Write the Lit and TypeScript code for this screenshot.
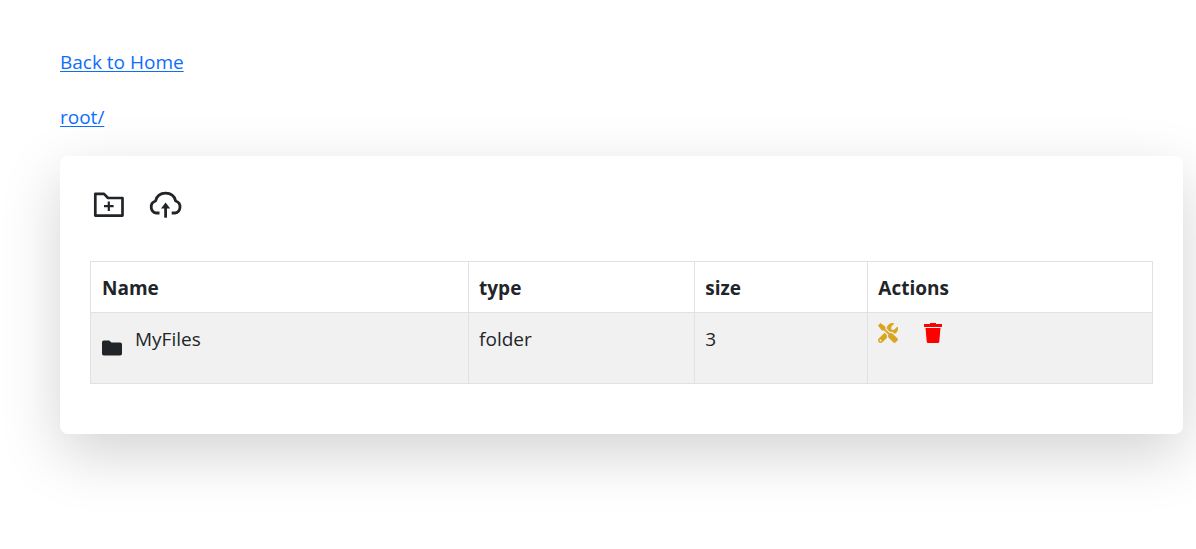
import { LitElement, html, css, svg } from "lit";
import { customElement, property } from "lit/decorators.js";

interface Entry {
  name: string;
  type: string;
  size: number;
}

const folderPlus = svg`
  <svg class="lg" viewBox="0 0 36 36" aria-hidden="true">
    <path d="M5.3 28.600V6.900H14L18 11H32.500V28.600Z" fill="none" stroke="currentColor" stroke-width="2.700" stroke-linejoin="round"/>
    <path d="M18.800 14.500V24M14 19.200H23.600" fill="none" stroke="currentColor" stroke-width="2.200"/>
  </svg>`;

const cloudUpload = svg`
  <svg class="lg" viewBox="0 0 36 36" aria-hidden="true">
    <path d="M12.500 26H9.300A6.200 6.200 0 0 1 8.500 14C9.700 9.300 13.500 6.200 18.600 6.200S27.500 9.300 28.700 14A6.200 6.200 0 0 1 27.900 26H24.700" fill="none" stroke="currentColor" stroke-width="2.800"/>
    <path d="M18.600 30.700V19" fill="none" stroke="currentColor" stroke-width="2.800"/>
    <path d="M18.600 15.500L23.200 21.500H14Z" fill="currentColor"/>
  </svg>`;

const folder = svg`
  <svg class="sm" viewBox="0 0 20 20" aria-hidden="true">
    <path d="M1.800 2.500H7.200L9.500 4.500H18.200Q20 4.500 20 6.300V15.700Q20 17.500 18.200 17.500H1.800Q0 17.500 0 15.700V4.300Q0 2.500 1.800 2.500Z" fill="currentColor"/>
  </svg>`;

const tools = svg`
  <svg class="sm" viewBox="0 0 512 512" aria-hidden="true">
    <path fill="currentColor" d="M331.800 224.100c28.290 0 54.880 10.990 74.860 30.970l19.590 19.590c40.010-17.740 71.250-53.300 81.620-96.650c5.725-23.920 5.340-47.080 .2148-68.400c-2.613-10.880-16.430-14.510-24.340-6.604l-68.900 68.900h-75.600V97.200l68.900-68.900c7.912-7.912 4.275-21.730-6.604-24.340c-21.320-5.125-44.480-5.510-68.400 .2148c-55.300 13.230-98.390 60.220-107.200 116.400C224.500 128.900 224.200 137 224.300 145l82.780 82.860C315.200 225.100 323.500 224.100 331.800 224.100zM384 278.600c-23.160-23.160-57.570-27.570-85.390-13.900L191.100 158L191.100 95.990l-127.100-95.990L0 63.100l96 127.100l62.040 .0077l106.700 106.600c-13.670 27.820-9.251 62.230 13.910 85.390l117 117.100c14.620 14.500 38.210 14.500 52.710-.0016l52.750-52.750c14.500-14.500 14.500-38.080-.0016-52.710L384 278.600zM227.900 307L168.700 247.900l-148.900 148.900c-26.370 26.370-26.370 69.080 0 95.450C32.960 505.400 50.210 512 67.500 512s34.540-6.592 47.720-19.780l119.100-119.100C225.500 352.300 222.600 329.400 227.900 307zM64 472c-13.250 0-24-10.750-24-24c0-13.260 10.750-24 24-24S88 434.700 88 448C88 461.300 77.250 472 64 472z"/>
  </svg>`;

const trash = svg`
  <svg class="sm" viewBox="0 0 20 20" aria-hidden="true">
    <path fill="currentColor" d="M7 0H13V1H19V4H1V1H7ZM2.500 5H17.500L16.300 18.500Q16.200 20 14.700 20H5.300Q3.800 20 3.700 18.500Z"/>
  </svg>`;

@customElement("file-table")
export class FileTable extends LitElement {
  @property({ attribute: false }) entries: Entry[] = [];

  static styles = css`
    :host { display: block; }
    *, *::before, *::after { box-sizing: border-box; }
    table { width: 100%; table-layout: fixed; border-collapse: collapse; }
    .name { width: 35.6%; }
    .type { width: 21.3%; }
    .size { width: 16.3%; }
    th, td { border: 1px solid #dee2e6; padding: 10px 10px 8px; text-align: left; vertical-align: top; line-height: 32px; }
    th { font-weight: 700; }
    td { height: 71px; background: #f1f1f1; }
    .entry { display: flex; gap: 13px; }
    .entry .sm { margin-top: 15px; }
    th:first-child, td:first-child { padding-left: 11px; }
    .sm { display: block; width: 20px; height: 20px; flex: none; }
    .actions { display: flex; gap: 25px; }
    button { display: block; border: 0; padding: 0; background: none; cursor: pointer; }
    .edit { color: goldenrod; }
    .delete { color: red; }
  `;

  render() {
    return html`<table>
      <thead>
        <tr>
          <th class="name" scope="col">Name</th>
          <th class="type" scope="col">type</th>
          <th class="size" scope="col">size</th>
          <th scope="col">Actions</th>
        </tr>
      </thead>
      <tbody>
        ${this.entries.map((e) => html`<tr>
          <td><div class="entry">${folder}<span>${e.name}</span></div></td>
          <td>${e.type}</td>
          <td>${e.size}</td>
          <td><div class="actions">
            <button class="edit" aria-label="Edit">${tools}</button>
            <button class="delete" aria-label="Delete">${trash}</button>
          </div></td>
        </tr>`)}
      </tbody>
    </table>`;
  }
}

@customElement("app-root")
export class AppRoot extends LitElement {
  private entries: Entry[] = [{ name: "MyFiles", type: "folder", size: 3 }];

  static styles = css`
    :host {
      display: block;
      padding: 47px 13px 0 60px;
      overflow: hidden;
      min-height: 100vh;
      box-sizing: border-box;
      background: #fff;
      color: #212529;
      font: 19px/30px "Segoe UI", "Open Sans", "Noto Sans", sans-serif;
    }
    nav { display: flex; flex-direction: column; align-items: flex-start; gap: 25px; }
    a { color: #0d6efd; text-decoration: underline; text-decoration-thickness: 1px; text-underline-offset: 2px; }
    .card {
      margin-top: 24px;
      padding: 31px 30px 50px;
      border-radius: 8px;
      background: #fff;
      box-shadow: 0 20px 60px rgba(0, 0, 0, 0.175);
    }
    .toolbar { display: flex; gap: 21px; margin-bottom: 38px; }
    .toolbar button { display: block; border: 0; padding: 0; background: none; color: inherit; cursor: pointer; }
    .lg { display: block; width: 36px; height: 36px; }
  `;

  render() {
    return html`
      <nav>
        <a href="#home">Back to Home</a>
        <a href="#root">root/</a>
      </nav>
      <main class="card">
        <div class="toolbar">
          <button aria-label="New folder">${folderPlus}</button>
          <button aria-label="Upload">${cloudUpload}</button>
        </div>
        <file-table .entries=${this.entries}></file-table>
      </main>`;
  }
}
